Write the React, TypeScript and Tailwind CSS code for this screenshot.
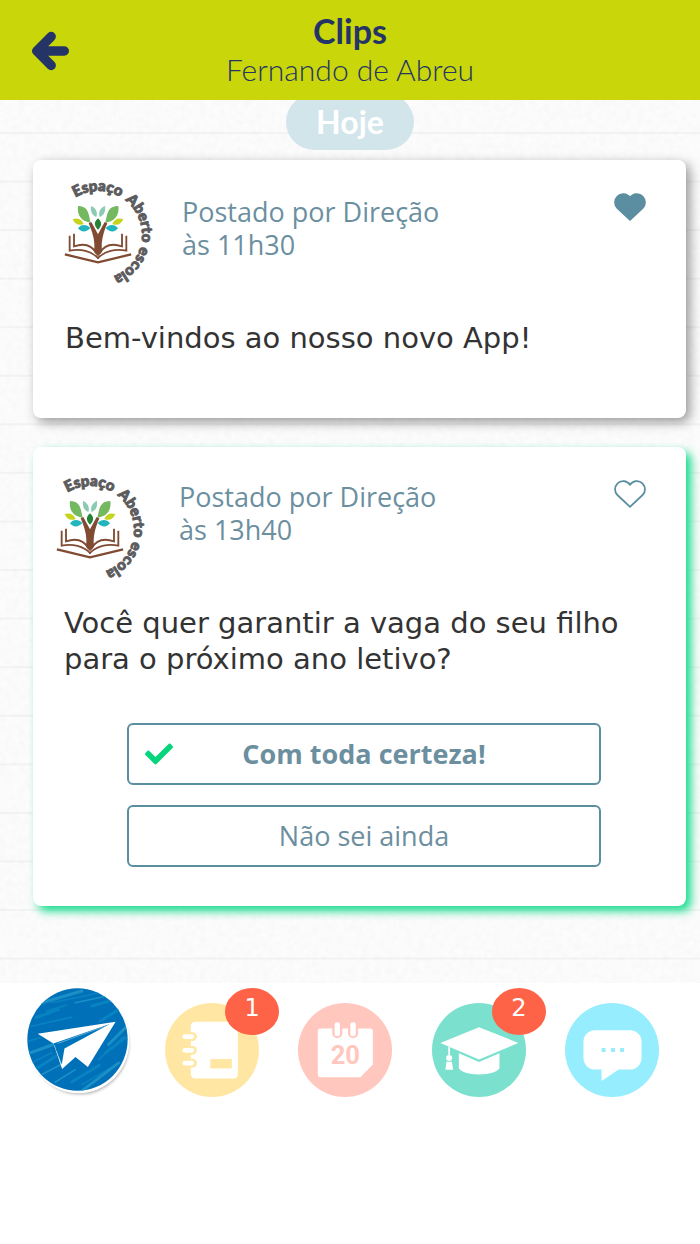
import React, { useState } from "react";
import { FaCheck } from "react-icons/fa";

function BackArrow() {
  return (
    <svg viewBox="94 90 118 122" className="h-10 w-[39px]" aria-hidden="true">
      <path
        d="M155 107 L111 151 L155 195 M111 151 H195"
        fill="none"
        stroke="#243466"
        strokeWidth="29"
        strokeLinecap="round"
        strokeLinejoin="round"
      />
    </svg>
  );
}

function SchoolLogo({ id }: { id: string }) {
  return (
    <svg viewBox="30 15 300 345" className="h-[115px] w-[100px]" role="img" aria-label="Espaço Aberto escola">
      <path id={id} d="M68.3 83.9 A132 132 0 1 1 144 324" fill="none" />
      <g className="font-['Lato']" fill="#5c5b5d" stroke="#5c5b5d" strokeWidth="3" fontSize="45" fontWeight="900">
        <text>
          <textPath href={`#${id}`} startOffset="9">Espaço</textPath>
        </text>
        <text>
          <textPath href={`#${id}`} startOffset="168">Aberto</textPath>
        </text>
        <text>
          <textPath href={`#${id}`} startOffset="322">escola</textPath>
        </text>
      </g>
      <path d="M122 155 C116 132 117 105 84 105 C80 134 96 152 122 155Z" fill="#74b85f" />
      <path d="M166 155 C172 132 171 105 205 105 C209 134 193 152 166 155Z" fill="#74b85f" />
      <path d="M139 138 C144 124 137 110 123 105 C121 122 126 133 139 138Z" fill="#8bcbb1" />
      <path d="M149 138 C144 124 151 110 165 105 C167 122 162 133 149 138Z" fill="#8bcbb1" />
      <path d="M144 142 C131 153 132 165 144 176 C156 165 157 153 144 142Z" fill="#268236" />
      <path d="M68 144 C83 139 96 144 101 159 C85 166 74 158 68 144Z" fill="#c5d51d" />
      <path d="M220 144 C205 139 192 144 187 159 C203 166 214 158 220 144Z" fill="#c5d51d" />
      <path d="M84 172 C92 159 110 158 121 171 C110 184 93 185 84 172Z" fill="#21b5bd" />
      <path d="M204 172 C196 159 178 158 167 171 C178 184 195 185 204 172Z" fill="#21b5bd" />
      <path
        d="M116 157 L124 153 L144 190 L164 153 L172 157 C158 190 153 213 156 242 L144 256 L132 242 C136 213 130 190 116 157Z"
        fill="#804b32"
      />
      <g fill="none" stroke="#804b32" strokeWidth="5.5" strokeLinecap="square">
        <path d="M72 191 V226 C101 216 125 222 139 246" />
        <path d="M216 191 V226 C187 216 163 222 149 246" />
        <path d="M59 197 V239 C91 232 125 240 144 261" />
        <path d="M229 197 V239 C197 232 163 240 144 261" />
        <path d="M48 251 L144 274 L240 251" strokeWidth="7" />
      </g>
    </svg>
  );
}

function Heart({ filled }: { filled: boolean }) {
  return (
    <svg viewBox="0 0 32 28" className="h-7 w-8" aria-hidden="true">
      <path
        d="M16 4.6 C12.7 .2 6.8 0 3.6 3.3 C.2 6.8 .3 12 3.4 15 L16 26.8 L28.6 15 C31.7 12 31.8 6.8 28.4 3.3 C25.2 0 19.3 .2 16 4.6Z"
        fill={filled ? "#5b8ea0" : "none"}
        stroke="#5b8ea0"
        strokeWidth="1.8"
      />
    </svg>
  );
}

const brush = [
  "M130 365 L250 330", "M160 365 L300 336", "M112 410 L180 385", "M230 365 L325 345", "M280 375 L340 358",
  "M92 437 L220 408", "M95 515 L165 490", "M98 545 L160 515", "M110 565 L172 525", "M125 583 L188 550",
  "M220 602 L302 552", "M250 610 L345 555", "M255 625 L360 545", "M300 535 L374 468", "M320 515 L380 470",
  "M170 603 L230 565", "M305 420 L360 385", "M90 480 L125 470", "M330 490 L380 440", "M145 390 L205 372",
];

function PlaneIcon() {
  return (
    <svg viewBox="80 315 320 335" className="h-[112px] w-[107px]" aria-hidden="true">
      <defs>
        <clipPath id="plane-disc">
          <ellipse cx="237" cy="475" rx="150" ry="153" />
        </clipPath>
        <filter id="plane-shadow" x="-10%" y="-10%" width="120%" height="120%">
          <feGaussianBlur stdDeviation="4" />
        </filter>
      </defs>
      <ellipse cx="244" cy="488" rx="147" ry="151" fill="#b4b4b4" filter="url(#plane-shadow)" />
      <ellipse cx="240" cy="480" rx="152" ry="156" fill="#fff" />
      <ellipse cx="237" cy="475" rx="150" ry="153" fill="#0070b9" />
      <g clipPath="url(#plane-disc)" fill="none" strokeLinecap="round">
        {brush.map((d, i) => (
          <path key={d} d={d} stroke={i % 3 ? "#0883c2" : "#1a90c6"} strokeWidth={i % 2 ? 5 : 9} />
        ))}
      </g>
      <path d="M118 458 L351 422 L268 557 L231 527 L191 563 L165 487Z" fill="#fff" />
      <path d="M165 487 L334 429 L198 502 L190 550Z" fill="#0074ba" />
      <path d="M178 487 L320 435" stroke="#8ac6e2" strokeWidth="2" />
      <path d="M168 492 L188 548" stroke="#7bc0df" strokeWidth="2" strokeDasharray="12 5" />
    </svg>
  );
}

function NotebookIcon() {
  return (
    <svg viewBox="496 369 280 280" className="size-[94px]" aria-hidden="true">
      <circle cx="636" cy="509" r="140" fill="#ffe7a3" />
      <rect x="573" y="425" width="140" height="169" rx="13" fill="#fff" />
      <rect x="631" y="536" width="64" height="28" fill="#ffe7a3" />
      {[469, 510, 548].map((y) => (
        <g key={y}>
          <rect x="543" y={y - 13} width="48" height="26" rx="13" fill="#ffe7a3" />
          <rect x="548" y={y - 7} width="35" height="14" rx="7" fill="#fff" />
        </g>
      ))}
    </svg>
  );
}

function CalendarIcon() {
  return (
    <svg viewBox="52 99 280 280" className="size-[94px]" aria-hidden="true">
      <circle cx="192" cy="239" r="140" fill="#ffc7be" />
      <path d="M119 175 H267 Q275 175 275 183 V282 L238 320 H119 Q111 320 111 312 V183 Q111 175 119 175Z" fill="#fff" />
      {[169, 216].map((x) => (
        <g key={x}>
          <rect x={x - 15} y="150" width="30" height="54" rx="15" fill="#ffc7be" />
          <rect x={x - 8} y="156" width="16" height="42" rx="7" fill="#fff" />
        </g>
      ))}
      <text
        x="193"
        y="280"
        textAnchor="middle"
        className="font-['Roboto']"
        fontSize="76"
        fontWeight="700"
        fill="#ffc7be"
      >
        20
      </text>
    </svg>
  );
}

function CapIcon() {
  return (
    <svg viewBox="455 99 280 280" className="size-[94px]" aria-hidden="true">
      <circle cx="595" cy="239" r="140" fill="#7ce0cf" />
      <path d="M480 218 L595 171 L712 218 L595 267Z" fill="#fff" />
      <path d="M535 249 L595 275 L656 249 V294 Q644 310 595 312 Q546 310 535 294Z" fill="#fff" />
      <path d="M506 230 V256" stroke="#fff" strokeWidth="5" />
      <circle cx="506" cy="263" r="9" fill="#fff" />
      <path d="M498 274 H514 L518 298 H495Z" fill="#fff" />
    </svg>
  );
}

function ChatIcon() {
  return (
    <svg viewBox="257 99 280 280" className="size-[94px]" aria-hidden="true">
      <circle cx="397" cy="239" r="140" fill="#96edfd" />
      <rect x="312" y="180" width="173" height="117" rx="34" fill="#fff" />
      <path d="M366 290 V331 L418 296Z" fill="#fff" />
      {[372, 400, 427].map((x) => (
        <rect key={x} x={x - 6} y="233" width="12" height="12" rx="2" fill="#96edfd" />
      ))}
    </svg>
  );
}

function Paper() {
  return (
    <svg className="absolute inset-0 h-full w-full" aria-hidden="true">
      <filter id="grain" x="0" y="0" width="100%" height="100%">
        <feTurbulence type="fractalNoise" baseFrequency="0.16" numOctaves="3" seed="4" />
        <feColorMatrix values="0 0 0 0 0.6  0 0 0 0 0.6  0 0 0 0 0.6  0.16 0 0 0 -0.05" />
      </filter>
      <rect width="100%" height="100%" filter="url(#grain)" />
    </svg>
  );
}

function PostHeader({
  id,
  time,
  liked,
  onLike,
  textClass,
  likeClass,
}: {
  id: string;
  time: string;
  liked: boolean;
  onLike: () => void;
  textClass: string;
  likeClass: string;
}) {
  return (
    <div className="flex items-start">
      <SchoolLogo id={id} />
      <p className={`flex-1 font-['Open_Sans',sans-serif] text-[27px] leading-[33px] text-[#6c8f9f] ${textClass}`}>
        Postado por Direção
        <br />
        às {time}
      </p>
      <button
        type="button"
        aria-label="Curtir"
        aria-pressed={liked}
        onClick={onLike}
        className={`cursor-pointer ${likeClass}`}
      >
        <Heart filled={liked} />
      </button>
    </div>
  );
}

const tabs = [
  { label: "Clips", Icon: PlaneIcon },
  { label: "Agenda", Icon: NotebookIcon, badge: 1 },
  { label: "Calendário", Icon: CalendarIcon },
  { label: "Escola", Icon: CapIcon, badge: 2 },
  { label: "Mensagens", Icon: ChatIcon },
];

const options = ["Com toda certeza!", "Não sei ainda"];

export default function App() {
  const [likes, setLikes] = useState([true, false]);
  const [choice, setChoice] = useState(0);
  const toggle = (n: number) => setLikes(likes.map((v, i) => (i === n ? !v : v)));

  return (
    <div className="min-h-screen bg-white font-['DejaVu_Sans',sans-serif]">
      <header className="grid grid-cols-[40px_1fr_40px] items-center bg-[#c9d60a] px-[31px] pt-3 pb-[11px] text-[#243466]">
        <button type="button" aria-label="Voltar" className="cursor-pointer">
          <BackArrow />
        </button>
        <div className="text-center font-['Lato',sans-serif]">
          <h1 className="text-[34px] leading-[38px] font-bold">Clips</h1>
          <p className="text-[30px] leading-[39px] font-light">Fernando de Abreu</p>
        </div>
      </header>

      <main className="relative overflow-hidden bg-[#fcfcfc] bg-[linear-gradient(#f3f3f3_2px,transparent_2px)] bg-[length:100%_5.5%] bg-[position:0_32px] pr-3.5 pb-[77px] pl-[33px]">
        <Paper />
        <div className="relative">
          <div className="-mt-1.5 flex justify-center">
            <span className="mr-[19px] rounded-full bg-[#d2e5ea] px-[30px] py-2 font-['Lato',sans-serif] text-[32px] leading-10 font-bold text-white">
              Hoje
            </span>
          </div>

          <article className="mt-2.5 rounded-lg bg-white pt-4 pr-10 pb-[62px] pl-[27px] shadow-[4px_4px_12px_rgba(0,0,0,0.4)]">
            <PostHeader
              id="arc-first"
              time="11h30"
              liked={likes[0]}
              onLike={() => toggle(0)}
              textClass="mt-[19px] ml-[22px]"
              likeClass="mt-[17px]"
            />
            <p className="mt-[29px] ml-[5px] text-[29px] leading-9 text-[#333]">Bem-vindos ao nosso novo App!</p>
          </article>

          <article className="mt-[29px] rounded-lg bg-white pt-6 pr-10 pb-[39px] pl-[19px] shadow-[5px_5px_10px_#12dc8c]">
            <PostHeader
              id="arc-second"
              time="13h40"
              liked={likes[1]}
              onLike={() => toggle(1)}
              textClass="mt-[9px] ml-[27px]"
              likeClass="mt-[9px]"
            />
            <p className="mt-[19px] ml-3 text-[29px] leading-9 text-[#333]">
              Você quer garantir a vaga do seu filho para o próximo ano letivo?
            </p>
            <div className="mt-[46px] mr-[45px] ml-[75px] flex flex-col gap-5">
              {options.map((text, i) => (
                <button
                  key={text}
                  type="button"
                  aria-pressed={choice === i}
                  onClick={() => setChoice(i)}
                  className="grid h-[62px] cursor-pointer grid-cols-[28px_1fr_28px] items-center rounded-md border-2 border-[#5b8ea0] bg-white px-4 font-['Open_Sans',sans-serif] text-[27px] text-[#6c8f9f]"
                >
                  <span>{choice === i && <FaCheck className="size-7 text-[#05d67b]" />}</span>
                  <span className={choice === i ? "font-bold" : "font-normal"}>{text}</span>
                </button>
              ))}
            </div>
          </article>
        </div>
      </main>

      <nav className="grid grid-cols-5 items-start justify-items-center pt-[3px] pr-[21px] pl-3">
        {tabs.map(({ label, Icon, badge }, i) => (
          <a key={label} href={`#${label}`} aria-label={label} className={i === 0 ? "block" : "relative mt-[17px] block"}>
            <Icon />
            {badge && (
              <span className="absolute -top-[15px] -right-5 flex h-[47px] w-[54px] justify-center rounded-[50%] bg-[#ff6347] pt-1.5 text-[24px] leading-7 text-white">
                {badge}
              </span>
            )}
          </a>
        ))}
      </nav>
    </div>
  );
}
